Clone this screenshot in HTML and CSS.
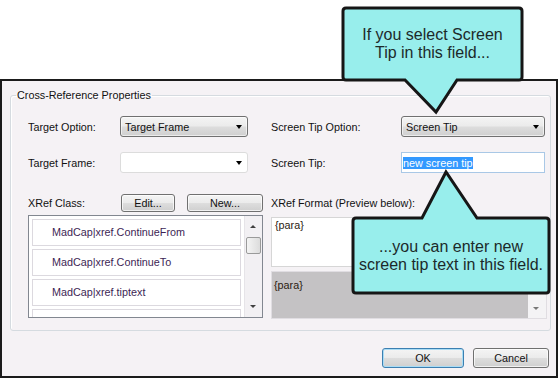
FILE: index.html
```html
<!DOCTYPE html>
<html lang="en">
<head>
  <meta charset="UTF-8" />
  <meta name="viewport" content="width=device-width, initial-scale=1.0"/>
  <title>Cross-Reference Properties</title>
  <link rel="stylesheet" href="styles.css">
</head>
<body>
  <div class="stage">

    <div class="dialog">
      <fieldset class="group">
        <legend>Cross-Reference Properties</legend>

        <div class="top-grid">
          <span class="label">Target Option:</span>
          <div class="combo">Target Frame<span class="arrow"></span></div>
          <span></span>
          <span class="label">Screen Tip Option:</span>
          <div class="combo">Screen Tip<span class="arrow"></span></div>

          <span class="label">Target Frame:</span>
          <div class="combo flat"><span></span><span class="arrow"></span></div>
          <span></span>
          <span class="label">Screen Tip:</span>
          <div class="textbox"><span class="sel">new screen tip</span></div>
        </div>

        <div class="bottom">
          <div class="class-col">
            <div class="class-head">
              <span class="label">XRef Class:</span>
              <button class="btn edit">Edit...</button>
              <button class="btn new">New...</button>
            </div>
            <div class="listbox">
              <ul class="items">
                <li>MadCap|xref.ContinueFrom</li>
                <li>MadCap|xref.ContinueTo</li>
                <li>MadCap|xref.tiptext</li>
                <li></li>
              </ul>
              <div class="vscroll">
                <span class="up"></span>
                <span class="thumb"></span>
                <span class="down"></span>
              </div>
            </div>
          </div>

          <div class="format-col">
            <span class="label format-label">XRef Format (Preview below):</span>
            <div class="format-edit">{para}</div>
            <div class="preview">
              <div class="preview-body">{para}</div>
              <div class="vscroll slim"><span class="down"></span></div>
            </div>
          </div>
        </div>
      </fieldset>

      <div class="actions">
        <button class="btn ok">OK</button>
        <button class="btn cancel">Cancel</button>
      </div>
    </div>

    <!-- callouts -->
    <svg class="bubble-shape one" width="186" height="112" viewBox="0 0 186 112">
      <path d="M6 3 H179 Q182 3 182 6 V72 Q182 75 179 75 H117 L96 107 L65 75 H6 Q3 75 3 72 V6 Q3 3 6 3 Z"/>
    </svg>
    <div class="bubble-text one">If you select Screen<br>Tip in this field...</div>

    <svg class="bubble-shape two" width="203" height="128" viewBox="0 0 203 128">
      <path d="M6 50 H72 L96 4 L127 50 H196 Q199 50 199 53 V122 Q199 125 196 125 H6 Q3 125 3 122 V53 Q3 50 6 50 Z"/>
    </svg>
    <div class="bubble-text two">...you can enter new<br>screen tip text in this field.</div>

  </div>
</body>
</html>
```

FILE: styles.css
```css
body {
  margin: 0;
  background: #fff;
  font-family: "Liberation Sans", Arial, sans-serif;
  font-size: 10.8px;
  color: #111;
}

.stage {
  position: relative;
  width: 558px;
  height: 379px;
  overflow: hidden;
}

.dialog {
  box-sizing: border-box;
  margin-top: 79px;
  width: 558px;
  height: 299px;
  border: 2px solid #1b1b1b;
  background: #f5f2f5;
}

/* group box */
.group {
  margin: 8px 5px 0 8px;
  padding: 15px 3px 11px 17px;
  min-width: 0;
  border: 1px solid #d5dbe0;
  border-radius: 3px;
  box-shadow: inset 1px 1px 0 #fff;
}

.group legend {
  margin-left: -12px;
  padding: 0 1px;
  line-height: 12px;
}

.label {
  align-self: center;
  white-space: nowrap;
}

.top-grid {
  display: grid;
  grid-template-columns: 92px 128px 23px 130px 144px;
  grid-template-rows: 21px 21px;
  row-gap: 15px;
}

.combo {
  box-sizing: border-box;
  display: flex;
  align-items: center;
  justify-content: space-between;
  padding: 0 5px 0 4px;
  border: 1px solid #707070;
  border-radius: 3px;
  background: linear-gradient(#f4f4f4 0%, #ebebeb 48%, #dddddd 52%, #cfcfcf 100%);
  box-shadow: inset 0 0 0 1px rgba(255,255,255,0.6);
}

.combo.flat {
  border-color: #dcdcdc;
  background: #fff;
  box-shadow: none;
}

.arrow {
  width: 0;
  height: 0;
  border-top: 4px solid #000;
  border-left: 3.5px solid transparent;
  border-right: 3.5px solid transparent;
}

.textbox {
  box-sizing: border-box;
  display: flex;
  align-items: center;
  padding-left: 1px;
  border: 1px solid #a9c8e6;
  background: #fff;
}

.sel {
  background: #3399ff;
  color: #fff;
  line-height: 12px;
}

/* lower half */
.bottom {
  display: flex;
  gap: 8px;
  margin-top: 21px;
}

.class-col {
  width: 235px;
}

.class-head {
  display: flex;
  align-items: center;
  height: 18px;
}

.class-head .label {
  width: 93px;
}

.btn {
  box-sizing: border-box;
  height: 18px;
  padding: 0;
  font: inherit;
  color: #111;
  border: 1px solid #707070;
  border-radius: 3px;
  background: linear-gradient(#f4f4f4 0%, #ebebeb 48%, #dddddd 52%, #cfcfcf 100%);
  box-shadow: inset 0 0 0 1px rgba(255,255,255,0.7);
}

.btn.edit { width: 54px; }
.btn.new { width: 76px; margin-left: 12px; }

.listbox {
  box-sizing: border-box;
  display: flex;
  margin-top: 3px;
  height: 103px;
  border: 1px solid #828790;
  background: #fff;
}

.items {
  flex: 1;
  margin: 0;
  padding: 3px;
  list-style: none;
  overflow: hidden;
}

.items li {
  box-sizing: border-box;
  height: 27px;
  margin-bottom: 3px;
  padding-left: 19px;
  line-height: 25px;
  border: 1px solid #dcd9df;
  color: #3d1f55;
}

.vscroll {
  position: relative;
  width: 17px;
  background: #f2f0f3;
  border-left: 1px solid #e6e4e8;
}

.vscroll .up,
.vscroll .down {
  position: absolute;
  left: 5px;
  width: 0;
  height: 0;
  border-left: 3.5px solid transparent;
  border-right: 3.5px solid transparent;
}

.vscroll .up {
  top: 9px;
  border-bottom: 3px solid #404040;
}

.vscroll .down {
  bottom: 9px;
  border-top: 3px solid #404040;
}

.vscroll .thumb {
  position: absolute;
  top: 21px;
  left: 1px;
  width: 13px;
  height: 15px;
  border: 1px solid #9a9a9a;
  border-radius: 2px;
  background: linear-gradient(90deg, #f4f4f4, #dcdcdc);
}

.format-col {
  width: 276px;
  display: flex;
  flex-direction: column;
}

.format-label {
  align-self: flex-start;
  height: 18px;
  line-height: 18px;
}

.format-edit {
  box-sizing: border-box;
  margin-top: 5px;
  height: 50px;
  padding: 0 3px;
  line-height: 14px;
  border: 1px solid #d6d6d6;
  background: #fff;
  color: #2a1a10;
}

.preview {
  box-sizing: border-box;
  display: flex;
  margin-top: 4px;
  height: 48px;
  border: 1px solid #e0dde2;
}

.preview-body {
  flex: 1;
  padding: 6px 2px 0;
  line-height: 14px;
  background: #c4c2c4;
  color: #2a1a10;
}

.vscroll.slim {
  width: 18px;
  background: #f4f3f5;
  border-left: none;
}

.vscroll.slim .down {
  bottom: 8px;
  border-top-color: #777;
}

/* OK / Cancel */
.actions {
  display: flex;
  justify-content: flex-end;
  gap: 9px;
  margin-top: 17px;
  padding-right: 7px;
}

.btn.ok {
  width: 82px;
  height: 20px;
  border-color: #3c7fb1;
  box-shadow: inset 0 0 0 1px #a9dcf5;
}

.btn.cancel {
  width: 76px;
  height: 20px;
}

/* Callouts */
.bubble-shape {
  position: absolute;
}

.bubble-shape path {
  fill: #98eeec;
  stroke: #161616;
  stroke-width: 3;
  stroke-linejoin: miter;
}

.bubble-shape.one { left: 340px; top: 5px; }
.bubble-shape.two { left: 350px; top: 168px; }

.bubble-text {
  position: absolute;
  display: flex;
  align-items: center;
  justify-content: center;
  text-align: center;
  font-size: 16px;
  line-height: 18px;
  color: #1c2a2a;
}

.bubble-text.one { left: 343px; top: 8px; width: 179px; height: 72px; }
.bubble-text.two { left: 353px; top: 218px; width: 196px; height: 75px; }
```
